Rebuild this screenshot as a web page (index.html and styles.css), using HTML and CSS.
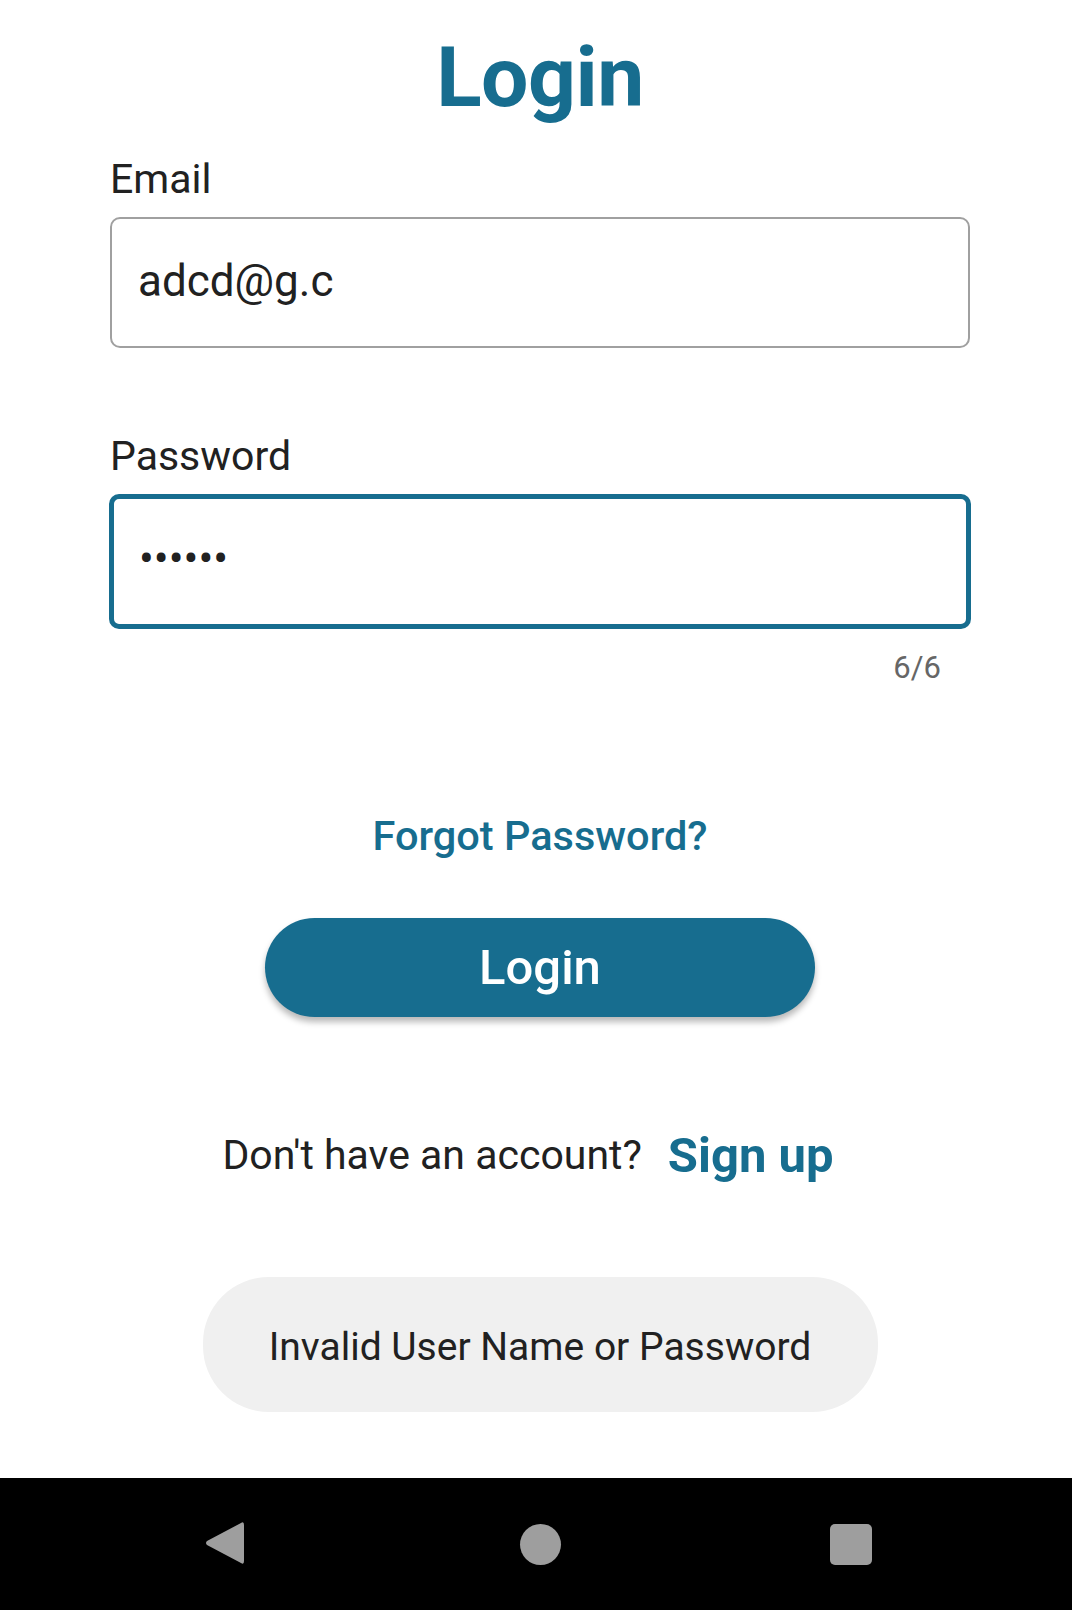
FILE: index.html
```html
<!DOCTYPE html>
<html lang="en">
<head>
<meta charset="utf-8">
<title>Login</title>
<link rel="stylesheet" href="styles.css">
</head>
<body>
<div class="screen">
  <main class="content">
    <h1 class="title">Login</h1>
    <label class="field-label" for="email">Email</label>
    <input class="field" id="email" type="text" value="adcd@g.c">
    <label class="field-label pw-label" for="password">Password</label>
    <input class="field field-focused" id="password" type="password" value="abcdef">
    <div class="counter">6/6</div>
    <a class="forgot" href="#">Forgot Password?</a>
    <button class="login-btn" type="button">Login</button>
    <div class="signup-row">
      <span class="signup-text">Don't have an account?</span>
      <a class="signup-link" href="#">Sign up</a>
    </div>
    <div class="toast">Invalid User Name or Password</div>
  </main>
  <nav class="navbar">
    <svg class="nav-icon" width="42" height="46" viewBox="0 0 42 46"><path d="M37 3 Q40 1 40 5 L40 41 Q40 45 37 43 L3 25 Q1 23 3 21 Z" fill="#9e9e9e"/></svg>
    <span class="nav-home"></span>
    <span class="nav-recent"></span>
  </nav>
</div>
</body>
</html>
```
FILE: styles.css
```css
* { box-sizing: border-box; }
html, body { margin: 0; padding: 0; background: #ffffff; }
body { font-family: Roboto, "Noto Sans", "Liberation Sans", sans-serif; color: #212121; }
.screen { width: 1072px; height: 1610px; display: flex; flex-direction: column; }
.content { flex: 1; display: flex; flex-direction: column; padding: 0 102px 0 110px; }
.title {
  margin: 28px 0 0; font-size: 84px; line-height: 100px; font-weight: 700;
  color: #176d8f; text-align: center; letter-spacing: -0.5px;
}
.field-label { display: block; margin-top: 27px; font-size: 41px; line-height: 48px; color: #212121; }
.pw-label { margin-top: 84px; }
.field {
  display: block; width: 860px; height: 131px; margin-top: 14px;
  border: 2px solid #a0a0a0; border-radius: 10px; background: #fff;
  padding: 0 26px 4px; font-family: inherit; font-size: 44px; color: #212121; outline: none;
}
.field-focused {
  width: 862px; height: 135px; margin: 14px -1px -2px; border: 5px solid #176d8f;
  padding: 0 25px 6px; letter-spacing: 0;
}
.counter {
  margin-top: 22px; align-self: flex-end; margin-right: 29px;
  font-size: 31px; line-height: 37px; color: #666666;
}
.forgot {
  align-self: center; margin-top: 126px; font-size: 41.5px; line-height: 48px;
  font-weight: 500; color: #176d8f; text-decoration: none;
}
.login-btn {
  align-self: center; margin-top: 58px; width: 550px; height: 99px; border: none;
  border-radius: 50px; background: #176d8f; color: #ffffff; font-family: inherit;
  font-size: 49px; font-weight: 500; box-shadow: 0 5px 6px rgba(0, 0, 0, 0.28); padding: 0;
}
.signup-row {
  align-self: center; margin-top: 106px; height: 60px; display: flex; align-items: baseline;
  gap: 26px; margin-right: 24px;
}
.signup-text { font-size: 41px; line-height: 60px; color: #212121; }
.signup-link { font-size: 49px; line-height: 60px; font-weight: 700; color: #176d8f; text-decoration: none; position: relative; top: 3px; }
.toast {
  align-self: center; margin-top: 94px; width: 675px; height: 135px; border-radius: 66px;
  background: #f0f0f0; display: flex; align-items: center; justify-content: center;
  font-size: 39px; color: #212121; padding-top: 5px;
}
.navbar {
  height: 132px; background: #000000; display: flex; align-items: center;
  justify-content: space-between; padding: 0 200px 0 204px;
}
.nav-icon { display: block; margin-top: -2px; }
.nav-home { width: 41px; height: 41px; border-radius: 50%; background: #9e9e9e; margin-left: 4px; }
.nav-recent { width: 42px; height: 41px; border-radius: 5px; background: #9e9e9e; }
```
